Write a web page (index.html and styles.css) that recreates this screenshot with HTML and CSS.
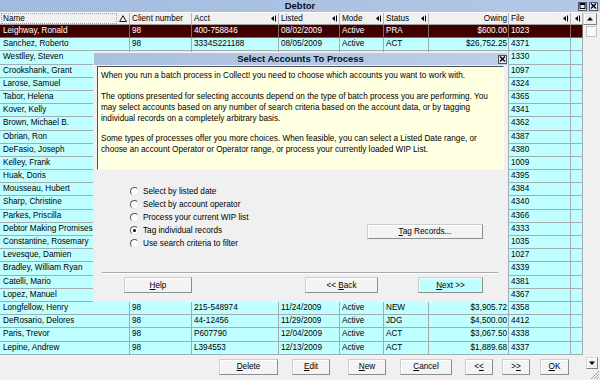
FILE: index.html
```html
<!DOCTYPE html>
<html>
<head>
<meta charset="utf-8">
<title>Debtor</title>
<link rel="stylesheet" href="styles.css">
</head>
<body>
<div class="win">
  <div class="titlebar">
    <span></span>
    <span class="title">Debtor</span>
    <div class="tb-btns">
      <span class="tbtn"><svg width="7" height="6" viewBox="0 0 7 6"><rect x="1" y="0.5" width="5" height="5" fill="none" stroke="#000"/><rect x="1" y="0" width="5" height="2" fill="#000"/></svg></span>
      <span class="tbtn"><svg width="7" height="6" viewBox="0 0 7 6"><path d="M1 0.5L6 5.5M6 0.5L1 5.5" stroke="#000" stroke-width="1.4"/></svg></span>
    </div>
  </div>
  <div class="body">
    <div class="main">
      <div class="grid">
        <div class="cols hdr">
          <div class="h hname"><span class="focus">Name</span><svg class="tri" width="8" height="7" viewBox="0 0 8 7"><path d="M4 0.7L7.4 6.5H0.6Z" fill="none" stroke="#000" stroke-width="0.9"/></svg></div>
          <div class="h">Client number</div>
          <div class="h">Acct<svg class="si" width="5" height="7" viewBox="0 0 5 7"><path d="M0 3.5L3 1V6Z M4 0.5H5V6.5H4Z"/></svg></div>
          <div class="h">Listed<svg class="si" width="5" height="7" viewBox="0 0 5 7"><path d="M0 3.5L3 1V6Z M4 0.5H5V6.5H4Z"/></svg></div>
          <div class="h">Mode<svg class="si" width="5" height="7" viewBox="0 0 5 7"><path d="M0 3.5L3 1V6Z M4 0.5H5V6.5H4Z"/></svg></div>
          <div class="h">Status<svg class="si" width="5" height="7" viewBox="0 0 5 7"><path d="M0 3.5L3 1V6Z M4 0.5H5V6.5H4Z"/></svg></div>
          <div class="h hr">Owing</div>
          <div class="h">File<svg class="si" width="5" height="7" viewBox="0 0 5 7"><path d="M0 3.5L3 1V6Z M4 0.5H5V6.5H4Z"/></svg></div>
          <div class="h hx"><svg class="si" width="5" height="7" viewBox="0 0 5 7"><path d="M0 3.5L3 1V6Z M4 0.5H5V6.5H4Z"/></svg></div>
        </div>
        <div class="cols row sel"><div class="c cn">Leighway, Ronald</div><div class="c">98</div><div class="c">400-758846</div><div class="c">08/02/2009</div><div class="c">Active</div><div class="c">PRA</div><div class="c r">$600.00</div><div class="c">1023</div><div class="c"></div></div>
        <div class="cols row"><div class="c cn">Sanchez, Roberto</div><div class="c">98</div><div class="c">3334S221188</div><div class="c">08/05/2009</div><div class="c">Active</div><div class="c">ACT</div><div class="c r">$26,752.25</div><div class="c">4371</div><div class="c"></div></div>
        <div class="cols row"><div class="c cn">Westlley, Steven</div><div class="c"></div><div class="c"></div><div class="c"></div><div class="c"></div><div class="c"></div><div class="c"></div><div class="c">1330</div><div class="c"></div></div>
        <div class="cols row"><div class="c cn">Crookshank, Grant</div><div class="c"></div><div class="c"></div><div class="c"></div><div class="c"></div><div class="c"></div><div class="c"></div><div class="c">1097</div><div class="c"></div></div>
        <div class="cols row"><div class="c cn">Larose, Samuel</div><div class="c"></div><div class="c"></div><div class="c"></div><div class="c"></div><div class="c"></div><div class="c"></div><div class="c">4324</div><div class="c"></div></div>
        <div class="cols row"><div class="c cn">Tabor, Helena</div><div class="c"></div><div class="c"></div><div class="c"></div><div class="c"></div><div class="c"></div><div class="c"></div><div class="c">4365</div><div class="c"></div></div>
        <div class="cols row"><div class="c cn">Kover, Kelly</div><div class="c"></div><div class="c"></div><div class="c"></div><div class="c"></div><div class="c"></div><div class="c"></div><div class="c">4341</div><div class="c"></div></div>
        <div class="cols row"><div class="c cn">Brown, Michael B.</div><div class="c"></div><div class="c"></div><div class="c"></div><div class="c"></div><div class="c"></div><div class="c"></div><div class="c">4362</div><div class="c"></div></div>
        <div class="cols row"><div class="c cn">Obrian, Ron</div><div class="c"></div><div class="c"></div><div class="c"></div><div class="c"></div><div class="c"></div><div class="c"></div><div class="c">4387</div><div class="c"></div></div>
        <div class="cols row"><div class="c cn">DeFasio, Joseph</div><div class="c"></div><div class="c"></div><div class="c"></div><div class="c"></div><div class="c"></div><div class="c"></div><div class="c">4380</div><div class="c"></div></div>
        <div class="cols row"><div class="c cn">Kelley, Frank</div><div class="c"></div><div class="c"></div><div class="c"></div><div class="c"></div><div class="c"></div><div class="c"></div><div class="c">1009</div><div class="c"></div></div>
        <div class="cols row"><div class="c cn">Huak, Doris</div><div class="c"></div><div class="c"></div><div class="c"></div><div class="c"></div><div class="c"></div><div class="c"></div><div class="c">4395</div><div class="c"></div></div>
        <div class="cols row"><div class="c cn">Mousseau, Hubert</div><div class="c"></div><div class="c"></div><div class="c"></div><div class="c"></div><div class="c"></div><div class="c"></div><div class="c">4384</div><div class="c"></div></div>
        <div class="cols row"><div class="c cn">Sharp, Christine</div><div class="c"></div><div class="c"></div><div class="c"></div><div class="c"></div><div class="c"></div><div class="c"></div><div class="c">4340</div><div class="c"></div></div>
        <div class="cols row"><div class="c cn">Parkes, Priscilla</div><div class="c"></div><div class="c"></div><div class="c"></div><div class="c"></div><div class="c"></div><div class="c"></div><div class="c">4366</div><div class="c"></div></div>
        <div class="cols row"><div class="c cn">Debtor Making Promises</div><div class="c"></div><div class="c"></div><div class="c"></div><div class="c"></div><div class="c"></div><div class="c"></div><div class="c">4333</div><div class="c"></div></div>
        <div class="cols row"><div class="c cn">Constantine, Rosemary</div><div class="c"></div><div class="c"></div><div class="c"></div><div class="c"></div><div class="c"></div><div class="c"></div><div class="c">1035</div><div class="c"></div></div>
        <div class="cols row"><div class="c cn">Levesque, Damien</div><div class="c"></div><div class="c"></div><div class="c"></div><div class="c"></div><div class="c"></div><div class="c"></div><div class="c">1027</div><div class="c"></div></div>
        <div class="cols row"><div class="c cn">Bradley, William Ryan</div><div class="c"></div><div class="c"></div><div class="c"></div><div class="c"></div><div class="c"></div><div class="c"></div><div class="c">4339</div><div class="c"></div></div>
        <div class="cols row"><div class="c cn">Catelli, Mario</div><div class="c"></div><div class="c"></div><div class="c"></div><div class="c"></div><div class="c"></div><div class="c"></div><div class="c">4381</div><div class="c"></div></div>
        <div class="cols row"><div class="c cn">Lopez, Manuel</div><div class="c"></div><div class="c"></div><div class="c"></div><div class="c"></div><div class="c"></div><div class="c"></div><div class="c">4367</div><div class="c"></div></div>
        <div class="cols row"><div class="c cn">Longfellow, Henry</div><div class="c">98</div><div class="c">215-548974</div><div class="c">11/24/2009</div><div class="c">Active</div><div class="c">NEW</div><div class="c r">$3,905.72</div><div class="c">4358</div><div class="c"></div></div>
        <div class="cols row"><div class="c cn">DeRosario, Delores</div><div class="c">98</div><div class="c">44-12456</div><div class="c">11/29/2009</div><div class="c">Active</div><div class="c">JDG</div><div class="c r">$4,500.00</div><div class="c">4412</div><div class="c"></div></div>
        <div class="cols row"><div class="c cn">Paris, Trevor</div><div class="c">98</div><div class="c">P607790</div><div class="c">12/04/2009</div><div class="c">Active</div><div class="c">ACT</div><div class="c r">$3,067.50</div><div class="c">4338</div><div class="c"></div></div>
        <div class="cols row"><div class="c cn">Lepine, Andrew</div><div class="c">98</div><div class="c">L394553</div><div class="c">12/13/2009</div><div class="c">Active</div><div class="c">ACT</div><div class="c r">$1,889.68</div><div class="c">4337</div><div class="c"></div></div>
      </div>
      <div class="actions">
        <span class="btn b-del"><span><u>D</u>elete</span></span>
        <span class="btn b-edit"><span><u>E</u>dit</span></span>
        <span class="btn b-new"><span><u>N</u>ew</span></span>
        <span class="btn b-cancel"><span><u>C</u>ancel</span></span>
        <span class="btn b-prev"><span>&lt;<u>&lt;</u></span></span>
        <span class="btn b-next"><span>&gt;<u>&gt;</u></span></span>
        <span class="btn b-ok"><span><u>O</u>K</span></span>
      </div>
    </div>
    <div class="vscroll">
      <span class="sb-btn sb-up"><svg width="6" height="4" viewBox="0 0 6 4"><path d="M3 0L6 3.5H0Z"/></svg></span>
      <span class="sb-thumb"></span>
      <span class="sb-track"></span>
      <span class="sb-btn sb-down"><svg width="6" height="4" viewBox="0 0 6 4"><path d="M0 0.5H6L3 4Z"/></svg></span>
      <span class="grip"><svg width="11" height="11" viewBox="0 0 11 11"><path d="M10 2L2 10M10 5L5 10M10 8L8 10" stroke="#a0a0a0" stroke-width="1"/></svg></span>
    </div>
  </div>

  <div class="dialog">
    <div class="dtitle">
      <span></span>
      <span class="title">Select Accounts To Process</span>
      <span class="dclose"><svg width="7" height="6" viewBox="0 0 7 6"><path d="M1 0.5L6 5.5M6 0.5L1 5.5" stroke="#000" stroke-width="1.4"/></svg></span>
    </div>
    <div class="info">
      <p>When you run a batch process in Collect! you need to choose which accounts you want to work with.</p>
      <p>The options presented for selecting accounts depend on the type of batch process you are performing. You<br>may select accounts based on any number of search criteria based on the account data, or by tagging<br>individual records on a completely arbitrary basis.</p>
      <p>Some types of processes offer you more choices. When feasible, you can select a Listed Date range, or<br>choose an account Operator or Operator range, or process your currently loaded WIP List.</p>
    </div>
    <div class="options">
      <div class="radios">
        <label class="radio"><span class="rb"></span>Select by listed date</label>
        <label class="radio"><span class="rb"></span>Select by account operator</label>
        <label class="radio"><span class="rb"></span>Process your current WIP list</label>
        <label class="radio"><span class="rb on"></span>Tag individual records</label>
        <label class="radio"><span class="rb"></span>Use search criteria to filter</label>
      </div>
      <span class="btn b-tag"><span><u>T</u>ag Records...</span></span>
    </div>
    <div class="sep"></div>
    <div class="dbtns">
      <span class="btn b-help"><span><u>H</u>elp</span></span>
      <span class="btn b-back"><span>&lt;&lt; <u>B</u>ack</span></span>
      <span class="btn b-nxt"><span><u>N</u>ext &gt;&gt;</span></span>
    </div>
  </div>
</div>
</body>
</html>
```
FILE: styles.css
```css
* { box-sizing: border-box; margin: 0; padding: 0; }
html, body { width: 600px; height: 380px; overflow: hidden; }
body {
  font-family: "Liberation Sans", Arial, sans-serif;
  font-size: 8.2px;
  color: #000;
  background: #f0f0f0;
}
.win { position: relative; width: 600px; height: 380px; }

.titlebar {
  height: 12px;
  display: grid;
  grid-template-columns: 1fr auto 1fr;
  align-items: center;
  background: linear-gradient(to right, #a2bbdd, #b3c8e6);
}
.title { font-weight: bold; font-size: 9.5px; color: #0a1020; line-height: 12px; }
.tb-btns { justify-self: end; display: flex; gap: 2px; padding-right: 2px; }
.tbtn {
  width: 9px; height: 9px;
  border: 1px solid #505a68;
  background: #dfe7f3;
  display: flex; align-items: center; justify-content: center;
}

.body { display: flex; height: 368px; }
.main { width: 583px; display: flex; flex-direction: column; }

.cols {
  display: grid;
  grid-template-columns: 130px 62px 87px 61px 44px 45px 80px 62px 12px;
}
.hdr {
  height: 13px;
  background: #f0f0f0;
  border-top: 1px solid #fbfbfb;
  border-bottom: 1px solid #a0a0a0;
}
.h {
  display: flex; align-items: center; justify-content: space-between;
  padding-left: 2px;
  border-right: 1px solid #b4b4b4;
  white-space: nowrap; overflow: hidden;
  line-height: 11px;
}
.hname { padding-left: 1px; }
.focus {
  flex: 1;
  border: 1px dotted #c89a5c;
  height: 11px;
  padding-left: 1px;
  line-height: 9px;
  margin-right: 2px;
}
.tri { margin-right: 2px; }
.si { margin-right: 2px; flex: none; }
.hr { justify-content: flex-end; padding-right: 1px; }
.hx { justify-content: flex-end; }

.row { height: 13.2px; background: #c0ffff; }
.row.sel { background: #400000; color: #fff; }
.c {
  border-right: 1px solid #a3adad;
  border-bottom: 1px solid #a3adad;
  padding-left: 2px;
  line-height: 12px;
  white-space: nowrap;
  overflow: hidden;
}
.sel .c { border-color: #7a6a6a; }
.cn { padding-left: 3px; }
.r { text-align: right; padding: 0 1px 0 0; }

.actions {
  flex: 1;
  display: flex;
  align-items: flex-start;
  padding: 4px 0 0 219px;
}
.btn {
  height: 16px;
  display: inline-flex; align-items: center; justify-content: center;
  border: 1px solid;
  border-color: #cdcdcd #8d8d8d #8d8d8d #cdcdcd;
  box-shadow: inset 1px 1px 0 #fff;
  background: #f3f3f3;
  white-space: nowrap;
}
.b-del { width: 59px; }
.b-edit { width: 38px; margin-left: 14px; }
.b-new { width: 38px; margin-left: 18px; }
.b-cancel { width: 52px; margin-left: 14px; }
.b-prev { width: 28px; margin-left: 13px; }
.b-next { width: 28px; margin-left: 9px; }
.b-ok { width: 29px; margin-left: 10px; }

.vscroll { width: 17px; display: flex; flex-direction: column; }
.sb-btn {
  display: flex; align-items: center; justify-content: center;
  border: 1px solid;
  border-color: #d8d8d8 #808080 #808080 #d8d8d8;
  box-shadow: inset 1px 1px 0 #fff;
  background: #f0f0f0;
}
.sb-up { height: 12px; margin: 1px 3px 0 0; }
.sb-thumb {
  height: 11px; margin: 1px 3px 0 3px;
  background: #fafafa;
  border: 1px solid #c4c4c4;
}
.sb-track { flex: 1; }
.sb-down { height: 12px; margin: 0 2px 0 3px; }
.grip { height: 11px; display: flex; justify-content: flex-end; align-items: flex-end; }

/* dialog */
.dialog {
  position: absolute;
  left: 93px; top: 52px;
  width: 415px; height: 250px;
  background: #f0f0f0;
  padding: 1px;
  display: flex; flex-direction: column;
}
.dtitle {
  height: 12px;
  display: grid;
  grid-template-columns: 1fr auto 1fr;
  align-items: center;
  background: linear-gradient(to right, #a9c0df, #bccfea);
}
.dclose {
  justify-self: end;
  width: 9px; height: 9px;
  border: 1px solid #4a5260;
  background: #e4eaf4;
  display: flex; align-items: center; justify-content: center;
}
.info {
  margin: 1px 3px 0 3px;
  height: 104px;
  background: #ffffe1;
  border: 1px solid;
  border-color: #505050 #fafafa #fafafa #505050;
  padding: 3px 0 0 3px;
  line-height: 11px;
  white-space: nowrap;
}
.info p { margin-bottom: 9.5px; }

.options { display: flex; margin-top: 15px; padding-left: 36px; align-items: flex-start; }
.radios { width: 237px; display: flex; flex-direction: column; }
.radio { height: 13px; display: flex; align-items: center; gap: 4px; }
.rb {
  width: 9px; height: 9px;
  border-radius: 50%;
  border: 1px solid;
  border-color: #555 #e6e6e6 #e6e6e6 #555;
  background: #fff;
  display: flex; align-items: center; justify-content: center;
}
.rb.on::after {
  content: "";
  width: 3px; height: 3px;
  border-radius: 50%;
  background: #000;
}
.b-tag { width: 116px; height: 15px; margin-top: 39px; }

.sep {
  margin: 22px 9px 0 8px;
  height: 2px;
  border-top: 1px solid #a8a8a8;
  border-bottom: 1px solid #fff;
}
.dbtns { display: flex; margin-top: 3px; padding-left: 30px; }
.b-help { width: 68px; }
.b-back { width: 73px; margin-left: 113px; }
.b-nxt { width: 65px; margin-left: 40px; background: #c0ffff; box-shadow: inset 1px 1px 0 #e8ffff; }
```
